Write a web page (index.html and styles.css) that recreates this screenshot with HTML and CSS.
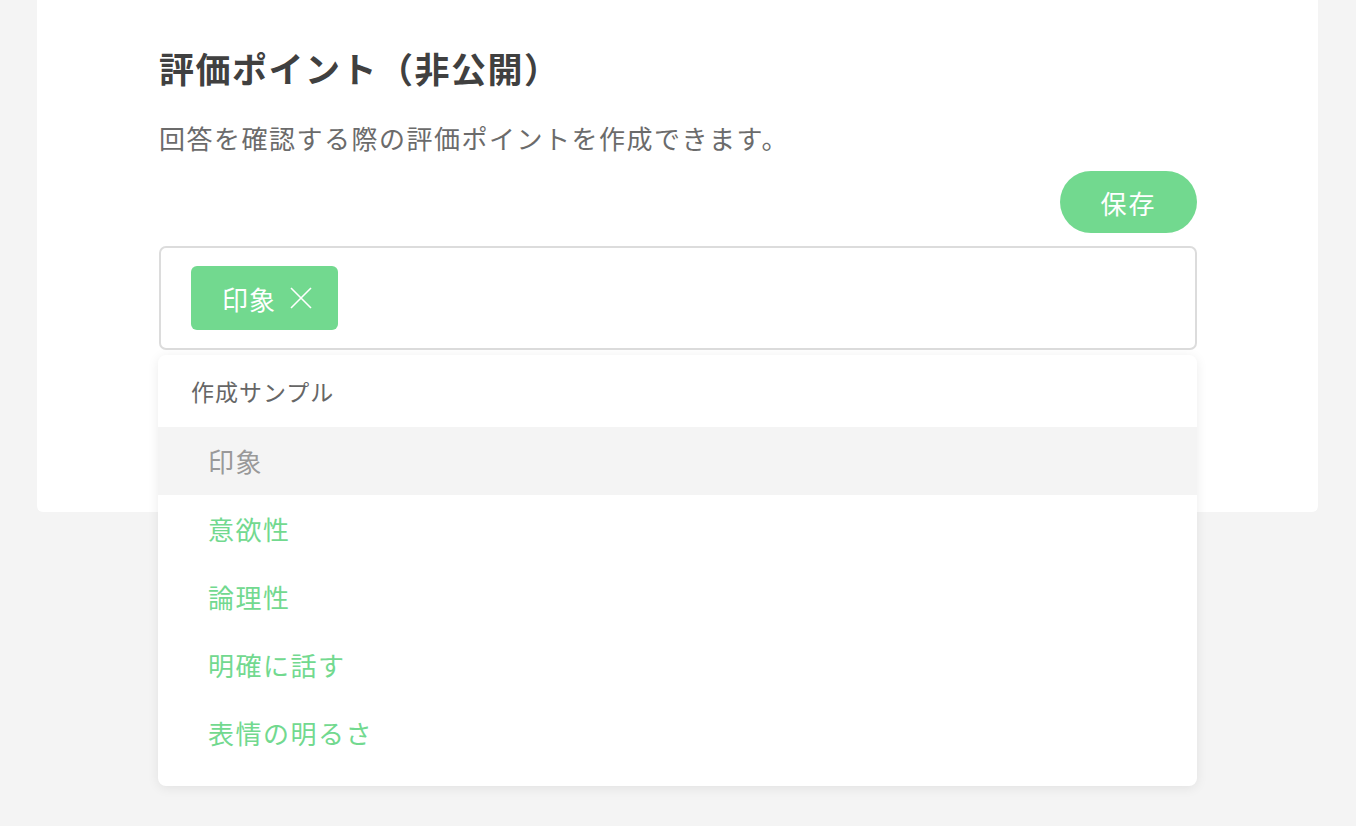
FILE: index.html
```html
<!DOCTYPE html>
<html lang="ja">
<head>
<meta charset="utf-8">
<link rel="stylesheet" href="styles.css">
</head>
<body>
<div class="page">
  <section class="card">
    <h2 class="title">評価ポイント（非公開）</h2>
    <p class="desc">回答を確認する際の評価ポイントを作成できます。</p>
    <div class="actions">
      <button class="save">保存</button>
    </div>
    <div class="field">
      <div class="input">
        <span class="tag">印象
          <svg class="x" width="22" height="22" viewBox="0 0 22 22"><path d="M1 1L21 21M21 1L1 21" stroke="#fff" stroke-width="1.6" fill="none"/></svg>
        </span>
      </div>
      <div class="menu">
        <div class="menu-head">作成サンプル</div>
        <ul class="menu-list">
          <li class="item selected">印象</li>
          <li class="item">意欲性</li>
          <li class="item">論理性</li>
          <li class="item">明確に話す</li>
          <li class="item">表情の明るさ</li>
        </ul>
      </div>
    </div>
  </section>
</div>
</body>
</html>
```
FILE: styles.css
```css
html, body {
  margin: 0;
  padding: 0;
}
body {
  background: #f4f4f4;
  font-family: "Noto Sans CJK JP", "Noto Sans", sans-serif;
  width: 1356px;
  height: 826px;
  overflow: hidden;
}
.page {
  padding: 0 38px 0 37px;
}
.card {
  background: #fff;
  border-radius: 0 0 6px 6px;
  height: 512px;
  box-sizing: border-box;
  padding: 44px 121px 0 122px;
}
.title {
  margin: 0;
  font-size: 35px;
  line-height: 48px;
  font-weight: 700;
  letter-spacing: 1.5px;
  color: #404040;
}
.desc {
  margin: 28px 0 0;
  font-size: 26px;
  line-height: 36px;
  letter-spacing: 1.5px;
  color: #6b6b6b;
}
.actions {
  display: flex;
  justify-content: flex-end;
  margin-top: 15px;
}
.save {
  width: 137px;
  height: 62px;
  border: none;
  border-radius: 31px;
  background: #72d98f;
  color: #fff;
  font-family: inherit;
  font-size: 26px;
  letter-spacing: 2px;
  padding: 0;
}
.field {
  position: relative;
  margin-top: 13px;
}
.input {
  height: 104px;
  box-sizing: border-box;
  border: 2px solid #dcdcdc;
  border-radius: 7px;
  padding: 18px 30px;
}
.tag {
  display: inline-flex;
  align-items: center;
  gap: 14px;
  height: 64px;
  box-sizing: border-box;
  padding: 0 26px 0 31px;
  background: #72d98f;
  border-radius: 6px;
  color: #fff;
  font-size: 26px;
  letter-spacing: 1px;
}
.x {
  display: block;
}
.menu {
  position: absolute;
  left: -1px;
  top: 109px;
  width: 1039px;
  background: #fff;
  border-radius: 8px;
  box-shadow: 0 2px 12px rgba(0,0,0,0.08);
  padding-bottom: 19px;
}
.menu-head {
  height: 72px;
  box-sizing: border-box;
  padding: 20px 33px 0;
  font-size: 23px;
  line-height: 32px;
  color: #666;
  letter-spacing: 1px;
}
.menu-list {
  list-style: none;
  margin: 0;
  padding: 0;
}
.item {
  height: 68px;
  line-height: 68px;
  padding-left: 50px;
  font-size: 26px;
  letter-spacing: 1.5px;
  color: #72d98f;
}
.item.selected {
  background: #f4f4f4;
  color: #999;
}
```
